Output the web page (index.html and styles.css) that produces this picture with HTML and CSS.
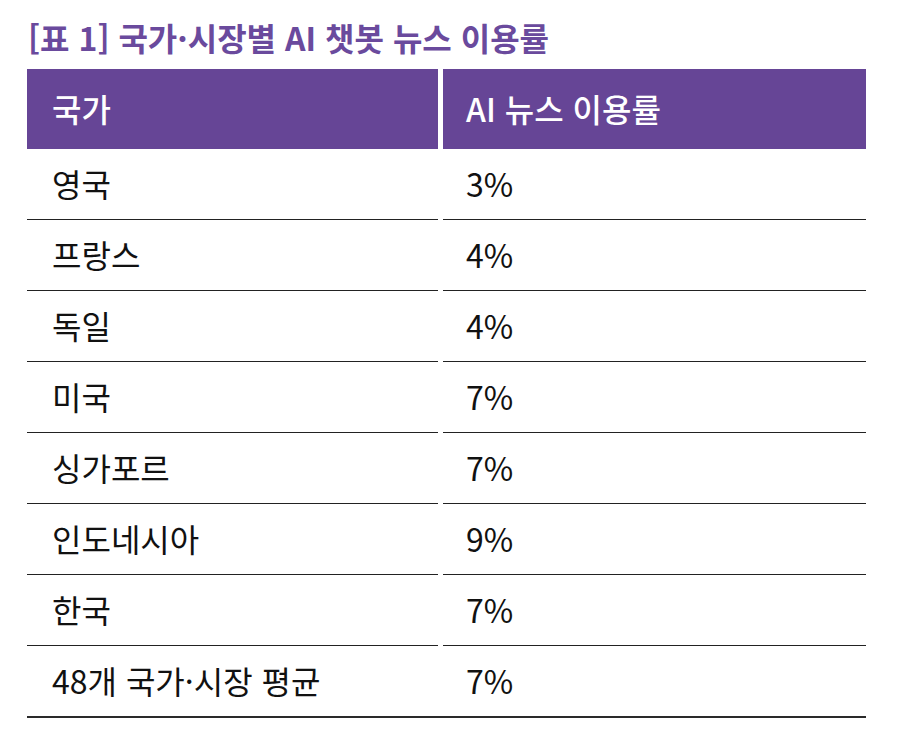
FILE: index.html
```html
<!DOCTYPE html>
<html lang="ko">
<head>
<meta charset="utf-8">
<link rel="stylesheet" href="styles.css">
</head>
<body>
<div class="page">
  <h1 class="title">[표 1] 국가·시장별 AI 챗봇 뉴스 이용률</h1>
  <div class="table">
    <div class="cell head">국가</div>
    <div class="cell head">AI 뉴스 이용률</div>
    <div class="cell">영국</div><div class="cell">3%</div>
    <div class="cell">프랑스</div><div class="cell">4%</div>
    <div class="cell">독일</div><div class="cell">4%</div>
    <div class="cell">미국</div><div class="cell">7%</div>
    <div class="cell">싱가포르</div><div class="cell">7%</div>
    <div class="cell">인도네시아</div><div class="cell">9%</div>
    <div class="cell">한국</div><div class="cell">7%</div>
    <div class="cell last">48개 국가·시장 평균</div><div class="cell last">7%</div>
  </div>
</div>
</body>
</html>
```
FILE: styles.css
```css
html, body {
  margin: 0;
  padding: 0;
  background: #ffffff;
}
.page {
  padding-left: 27px;
  width: 839px;
  font-family: "Noto Sans CJK KR", "Noto Sans", sans-serif;
}
.title {
  margin: 0;
  height: 69px;
  box-sizing: border-box;
  padding-top: 17px;
  padding-left: 1px;
  font-size: 32px;
  line-height: 40px;
  font-weight: 700;
  color: #6a4a9d;
  letter-spacing: 0;
}
.table {
  display: grid;
  grid-template-columns: 411px 423px;
  column-gap: 5px;
  border-bottom: 2px solid #2a2a2a;
}
.cell {
  height: 71px;
  box-sizing: border-box;
  border-bottom: 1px solid #222222;
  padding-left: 25px;
  padding-bottom: 2px;
  display: flex;
  align-items: center;
  font-size: 32px;
  color: #111111;
}
.cell:nth-child(even) {
  padding-left: 23px;
}
.head {
  height: 80px;
  background: #664596;
  color: #ffffff;
  font-weight: 500;
  border-bottom: none;
}
.last {
  height: 70px;
  border-bottom: none;
}
```
